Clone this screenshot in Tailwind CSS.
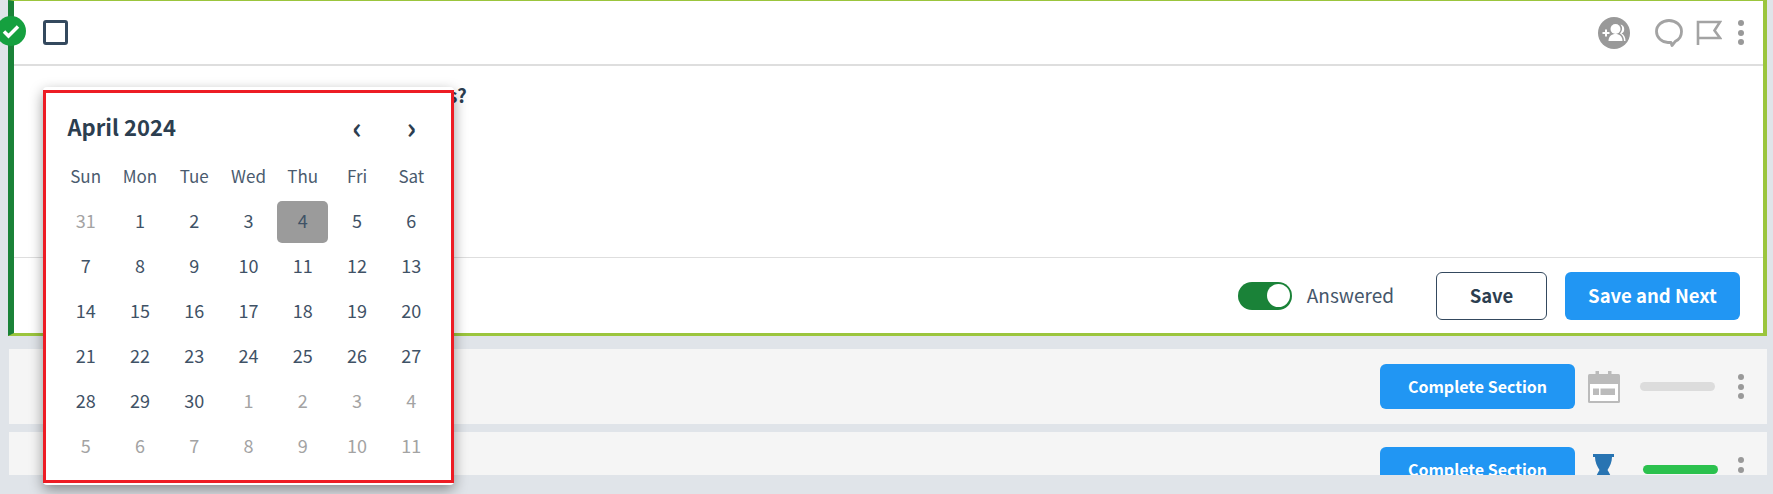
<!DOCTYPE html>
<html lang="en">
<head>
    <meta charset="UTF-8">
    <meta name="viewport" content="width=device-width, initial-scale=1.0">
    <title>Section questions</title>
    <script src="https://cdn.jsdelivr.net/npm/@tailwindcss/browser@4"></script>
</head>
<body class="bg-[#e0e4e9] h-[494px] overflow-hidden relative text-[#2c3e50] font-['Noto_Sans_CJK_SC','Liberation_Sans',sans-serif]">
    <div class="h-[475px] overflow-hidden pl-2 pr-[6px]">
        <!-- Question card -->
        <div class="h-[336px] flex flex-col bg-white border-l-[6px] border-l-[#1a8238] border-t border-t-[#9bc53d] border-r-4 border-r-[#9bc53d] border-b-[3px] border-b-[#9bc53d]">
            <div class="h-[65px] shrink-0 border-b-2 border-[#dedede] flex items-center pl-[29px] pr-[19px]">
                <div class="w-[25px] h-[25px] border-[3px] border-[#34495e] rounded-[3px]"></div>
                <div class="ml-auto flex items-center">
                    <svg class="w-8 h-8" viewBox="0 0 32 32">
                        <circle cx="16" cy="16" r="16" fill="#999"/>
                        <path d="M4.500 15h2.500v-2.500h2V15h2.500v2H9v2.500H7V17H4.500z" fill="#fff"/>
                        <circle cx="17.500" cy="12" r="5" fill="#fff"/>
                        <path d="M10.500 24c0-4.500 3-7 7-7s7 2.500 7 7z" fill="#fff"/>
                        <path d="M22.500 7.500a4.800 4.800 0 0 1 1 9c2.500 1 4 3.500 4 7.500H26c0-3.500-1.500-6-4-7.500a6.500 6.500 0 0 0 .5-9z" fill="#fff"/>
                    </svg>
                    <svg class="w-7 h-7 ml-[25px]" viewBox="0 0 28 28" fill="none" stroke="#a3a3a3" stroke-width="2.800">
                        <path d="M14 1.500C7 1.500 1.500 6.300 1.500 12.500S7 23.500 13 23.500h3l1 3 3.500-4.300c3.800-1.800 6-5.500 6-9.700C26.500 6.300 21 1.500 14 1.500z" stroke-linejoin="round"/>
                    </svg>
                    <svg class="w-[26px] h-[26px] ml-[13px]" viewBox="0 0 26 26" fill="none" stroke="#a3a3a3" stroke-width="2.600">
                        <path d="M2 25V2h22l-5.500 8.500L24 18H2"/>
                    </svg>
                    <div class="ml-[16px] flex flex-col gap-[3.500px]">
                        <span class="w-[6px] h-[6px] rounded-full bg-[#999]"></span>
                        <span class="w-[6px] h-[6px] rounded-full bg-[#999]"></span>
                        <span class="w-[6px] h-[6px] rounded-full bg-[#999]"></span>
                    </div>
                </div>
            </div>
            <div class="flex-1 pl-[434px] pt-[15px]">
                <p class="text-[19px] leading-[28px] font-bold">s?</p>
            </div>
            <div class="h-[76px] shrink-0 border-t border-[#dedede] flex items-center justify-end pr-[23px]">
                <div class="w-[54px] h-[28px] rounded-full bg-[#1a8238] flex items-center justify-end pr-[2px]">
                    <span class="w-[23px] h-[23px] rounded-full bg-white"></span>
                </div>
                <span class="ml-[15px] pb-[2px] text-[19px] leading-6 text-[#45566a]">Answered</span>
                <button class="ml-[42px] w-[111px] h-[48px] bg-white border border-[#34495e] rounded-[6px] text-[18.500px] font-bold">Save</button>
                <button class="ml-[18px] w-[175px] h-[48px] bg-[#2196f3] rounded-[6px] text-[18.500px] font-bold text-white">Save and Next</button>
            </div>
        </div>

        <!-- Section rows -->
        <div class="mt-[13px] ml-px h-[75px] bg-[#f5f5f5] flex items-center justify-end pr-[23px]">
            <button class="w-[195px] h-[45px] pb-[2px] bg-[#2196f3] rounded-[6px] text-[16px] font-bold text-white">Complete Section</button>
            <svg class="ml-[13px] w-8 h-8" viewBox="0 0 32 32">
                <rect x="0" y="3" width="32" height="29" rx="1.500" fill="#bbb"/>
                <rect x="7.500" y="0" width="3.500" height="6" fill="#bbb"/>
                <rect x="20" y="0" width="3.500" height="6" fill="#bbb"/>
                <rect x="2" y="13" width="28" height="17" fill="#fff"/>
                <rect x="5" y="17.500" width="6" height="6.500" fill="#bbb"/>
                <rect x="12.500" y="17.500" width="14.500" height="6.500" fill="#bbb"/>
            </svg>
            <div class="ml-[20px] w-[75px] h-[9px] rounded-full bg-[#dcdcdc]"></div>
            <div class="ml-[23px] flex flex-col gap-[3.500px]">
                <span class="w-[6px] h-[6px] rounded-full bg-[#999]"></span>
                <span class="w-[6px] h-[6px] rounded-full bg-[#999]"></span>
                <span class="w-[6px] h-[6px] rounded-full bg-[#999]"></span>
            </div>
        </div>
        <div class="mt-[8px] ml-px h-[75px] bg-[#f5f5f5] flex items-center justify-end pr-[23px]">
            <button class="w-[195px] h-[45px] pb-[2px] bg-[#2196f3] rounded-[6px] text-[16px] font-bold text-white">Complete Section</button>
            <svg class="ml-[18px] w-[21px] h-[32px]" viewBox="0 0 21 32">
                <path d="M0 0h21v3h-2c0 5-2 9-4.500 13 2.500 4 4.500 8 4.500 13h2v3H0v-3h2c0-5 2-9 4.500-13C4 12 2 8 2 3H0z" fill="#2874b2"/>
            </svg>
            <div class="ml-[29px] w-[75px] h-[9px] rounded-full bg-[#2bc14e]"></div>
            <div class="ml-[20px] flex flex-col gap-[3.500px]">
                <span class="w-[6px] h-[6px] rounded-full bg-[#999]"></span>
                <span class="w-[6px] h-[6px] rounded-full bg-[#999]"></span>
                <span class="w-[6px] h-[6px] rounded-full bg-[#999]"></span>
            </div>
        </div>
    </div>

    <!-- Answered badge -->
    <div class="absolute left-[-4px] top-[16px] w-[30px] h-[30px] rounded-full bg-[#15a03f] flex items-center justify-center">
        <svg class="w-[18px] h-[18px]" viewBox="0 0 18 18" fill="none" stroke="#fff" stroke-width="3.500">
            <path d="M2 9.500l4.500 4.500L16 4.500"/>
        </svg>
    </div>

    <!-- Date picker -->
    <div class="absolute left-[43px] top-[87px] w-[411px] bg-white rounded-[4px] pt-[3px] pb-[2px] shadow-[0_5px_14px_rgba(0,0,0,0.4)]">
        <div class="h-[393px] border-[3px] border-[#ed1c24] px-[12.500px] pt-[11px]">
            <div class="grid grid-cols-7 h-[48px] pb-[4px] items-center">
                <div class="col-span-5 pl-[9px] text-[22px] font-bold leading-none">April 2024</div>
                <div class="text-center text-[30px] font-bold leading-none">‹</div>
                <div class="text-center text-[30px] font-bold leading-none">›</div>
            </div>
            <div class="grid grid-cols-7 h-[47px] items-center text-center text-[17px] text-[#4a5b6e]">
                <div>Sun</div><div>Mon</div><div>Tue</div><div>Wed</div><div>Thu</div><div>Fri</div><div>Sat</div>
            </div>
            <div class="grid grid-cols-7 auto-rows-[45px] text-center text-[18px] text-[#3f5266] [&>div]:pb-[2px]">
                <div class="flex items-center justify-center text-[#a3a3a3]">31</div>
                <div class="flex items-center justify-center">1</div>
                <div class="flex items-center justify-center">2</div>
                <div class="flex items-center justify-center">3</div>
                <div class="flex items-center justify-center"><span class="w-[51px] h-[42px] mt-[2px] pb-[2px] rounded-[5px] bg-[#9b9b9b] flex items-center justify-center">4</span></div>
                <div class="flex items-center justify-center">5</div>
                <div class="flex items-center justify-center">6</div>
                <div class="flex items-center justify-center">7</div>
                <div class="flex items-center justify-center">8</div>
                <div class="flex items-center justify-center">9</div>
                <div class="flex items-center justify-center">10</div>
                <div class="flex items-center justify-center">11</div>
                <div class="flex items-center justify-center">12</div>
                <div class="flex items-center justify-center">13</div>
                <div class="flex items-center justify-center">14</div>
                <div class="flex items-center justify-center">15</div>
                <div class="flex items-center justify-center">16</div>
                <div class="flex items-center justify-center">17</div>
                <div class="flex items-center justify-center">18</div>
                <div class="flex items-center justify-center">19</div>
                <div class="flex items-center justify-center">20</div>
                <div class="flex items-center justify-center">21</div>
                <div class="flex items-center justify-center">22</div>
                <div class="flex items-center justify-center">23</div>
                <div class="flex items-center justify-center">24</div>
                <div class="flex items-center justify-center">25</div>
                <div class="flex items-center justify-center">26</div>
                <div class="flex items-center justify-center">27</div>
                <div class="flex items-center justify-center">28</div>
                <div class="flex items-center justify-center">29</div>
                <div class="flex items-center justify-center">30</div>
                <div class="flex items-center justify-center text-[#a3a3a3]">1</div>
                <div class="flex items-center justify-center text-[#a3a3a3]">2</div>
                <div class="flex items-center justify-center text-[#a3a3a3]">3</div>
                <div class="flex items-center justify-center text-[#a3a3a3]">4</div>
                <div class="flex items-center justify-center text-[#a3a3a3]">5</div>
                <div class="flex items-center justify-center text-[#a3a3a3]">6</div>
                <div class="flex items-center justify-center text-[#a3a3a3]">7</div>
                <div class="flex items-center justify-center text-[#a3a3a3]">8</div>
                <div class="flex items-center justify-center text-[#a3a3a3]">9</div>
                <div class="flex items-center justify-center text-[#a3a3a3]">10</div>
                <div class="flex items-center justify-center text-[#a3a3a3]">11</div>
            </div>
        </div>
    </div>
</body>
</html>
